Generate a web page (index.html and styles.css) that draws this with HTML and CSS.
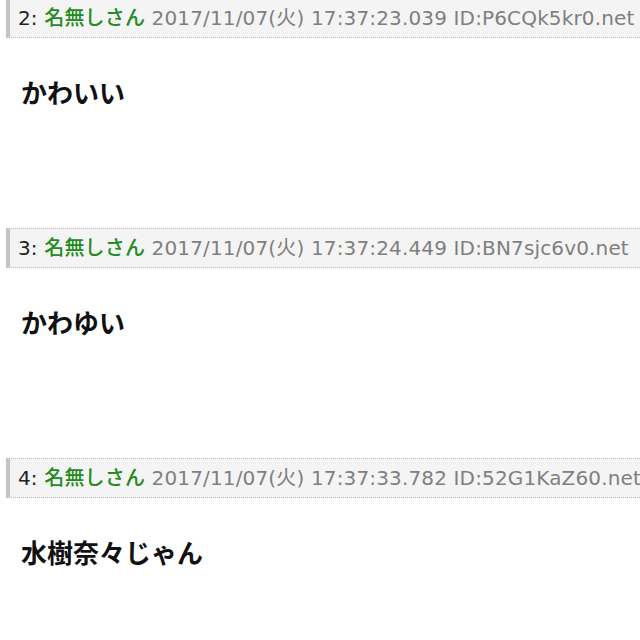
FILE: index.html
```html
<!DOCTYPE html>
<html lang="ja">
  <head>
    <meta charset="UTF-8" />
    <meta name="viewport" content="width=device-width, initial-scale=1.0" />
    <title>スレッド</title>
    <link rel="stylesheet" href="styles.css">
  </head>
  <body>
    <div class="thread">
      <!-- Post 2 -->
      <div class="post">
        <div class="post-head">
          <span class="res-no">2:</span>
          <span class="res-name">名無しさん</span>
          <span class="res-date">2017/11/07(火) 17:37:23.039 ID:P6CQk5kr0.net</span>
        </div>
        <div class="post-body">かわいい</div>
      </div>

      <!-- Post 3 -->
      <div class="post">
        <div class="post-head">
          <span class="res-no">3:</span>
          <span class="res-name">名無しさん</span>
          <span class="res-date">2017/11/07(火) 17:37:24.449 ID:BN7sjc6v0.net</span>
        </div>
        <div class="post-body">かわゆい</div>
      </div>

      <!-- Post 4 -->
      <div class="post">
        <div class="post-head">
          <span class="res-no">4:</span>
          <span class="res-name">名無しさん</span>
          <span class="res-date">2017/11/07(火) 17:37:33.782 ID:52G1KaZ60.net</span>
        </div>
        <div class="post-body">水樹奈々じゃん</div>
      </div>
    </div>
  </body>
</html>
```

FILE: styles.css
```css
body {
  margin: 0;
  padding: 0;
  background-color: #fff;
  font-family: "DejaVu Sans", "Noto Sans CJK JP", sans-serif;
}

.thread {
  margin-top: -2px;
}

.post {
  height: 230px;
}

.post:last-child {
  height: auto;
}

.post-head {
  margin-left: 6px;
  padding: 8px 0 7px 8px;
  background-color: #f4f4f4;
  border-left: 4px solid #c4c4c4;
  border-top: 1px dotted #b8b8b8;
  border-bottom: 1px dotted #b8b8b8;
  font-size: 20px;
  line-height: 23px;
  letter-spacing: 0.15px;
  white-space: nowrap;
  overflow: hidden;
}

.res-no {
  color: #222;
}

.res-name {
  color: #228b22;
  font-weight: 500;
}

.res-date {
  color: #7f7f7f;
}

.post-body {
  padding: 36px 0 0 21px;
  font-family: "Noto Sans CJK JP", sans-serif;
  font-size: 26px;
  font-weight: bold;
  line-height: 36px;
  color: #111;
}
```
